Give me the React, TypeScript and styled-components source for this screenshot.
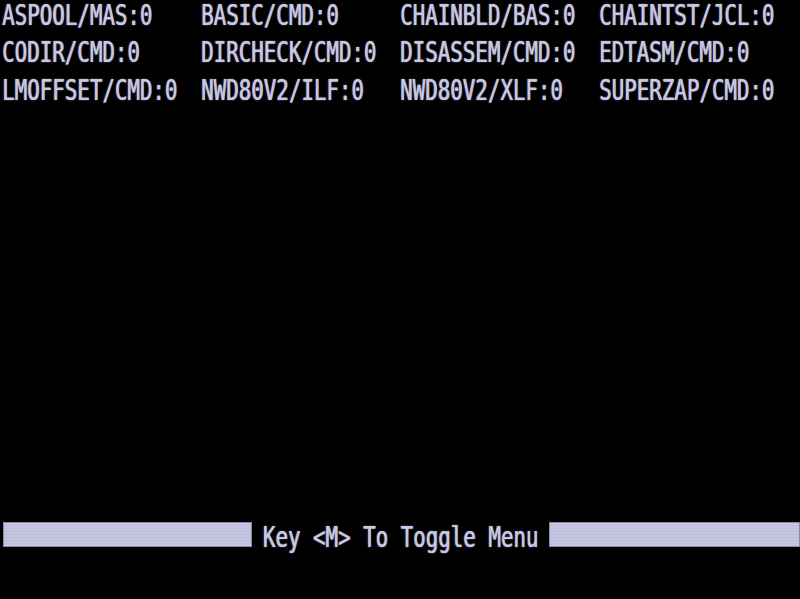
import React from "react";
import styled, { createGlobalStyle } from "styled-components";

const Global = createGlobalStyle`
  html, body { margin: 0; padding: 0; background: #000; }
  body { width: 800px; height: 599px; overflow: hidden; }
`;

const Screen = styled.div`
  width: 800px;
  height: 599px;
  background: #000;
  display: grid;
  grid-template-rows: repeat(16, 1fr);
  box-sizing: border-box;
  padding-left: 2px;
  overflow: hidden;
  font-family: "DejaVu Sans Mono", "Liberation Mono", monospace;
  font-size: 20.8px;
  color: #c8c8e6;
`;

const ListRow = styled.div`
  display: grid;
  grid-template-columns: repeat(4, 199px);
`;

const Glyphs = styled.span`
  display: inline-block;
  line-height: 1;
  white-space: pre;
  transform: scaleY(1.38);
  transform-origin: top left;
  text-shadow: 0.6px 0 0 rgba(200, 200, 230, 0.85),
    0 0 1.5px rgba(200, 200, 235, 0.6);
`;

const Footer = styled.div`
  display: flex;
  align-items: flex-start;
  margin-left: -2px;
`;

const Bar = styled.div<{ $w: number }>`
  width: ${(p) => p.$w}px;
  height: 25px;
  margin-top: -2px;
  box-sizing: border-box;
  background: repeating-linear-gradient(
    to bottom,
    #c6c6e2 0px,
    #c6c6e2 2px,
    #bcbcda 2px,
    #bcbcda 3px
  );
  border: 1px solid #8a8aa6;
  flex-shrink: 0;
`;

const Label = styled.div`
  flex: 1;
  text-align: center;
  margin-top: -2px;
`;

const files = [
  ["ASPOOL/MAS:0", "BASIC/CMD:0", "CHAINBLD/BAS:0", "CHAINTST/JCL:0"],
  ["CODIR/CMD:0", "DIRCHECK/CMD:0", "DISASSEM/CMD:0", "EDTASM/CMD:0"],
  ["LMOFFSET/CMD:0", "NWD80V2/ILF:0", "NWD80V2/XLF:0", "SUPERZAP/CMD:0"],
];

export default function App() {
  const empty = Array.from({ length: 11 });
  return (
    <>
      <Global />
      <Screen>
        {files.map((row, i) => (
          <ListRow key={i}>
            {row.map((f) => (
              <div key={f}>
                <Glyphs>{f}</Glyphs>
              </div>
            ))}
          </ListRow>
        ))}
        {empty.map((_, i) => (
          <div key={"e" + i} />
        ))}
        <Footer>
          <Bar $w={249} style={{ marginLeft: 3 }} />
          <Label>
            <Glyphs>Key &lt;M&gt; To Toggle Menu</Glyphs>
          </Label>
          <Bar $w={251} />
        </Footer>
        <div />
      </Screen>
    </>
  );
}
